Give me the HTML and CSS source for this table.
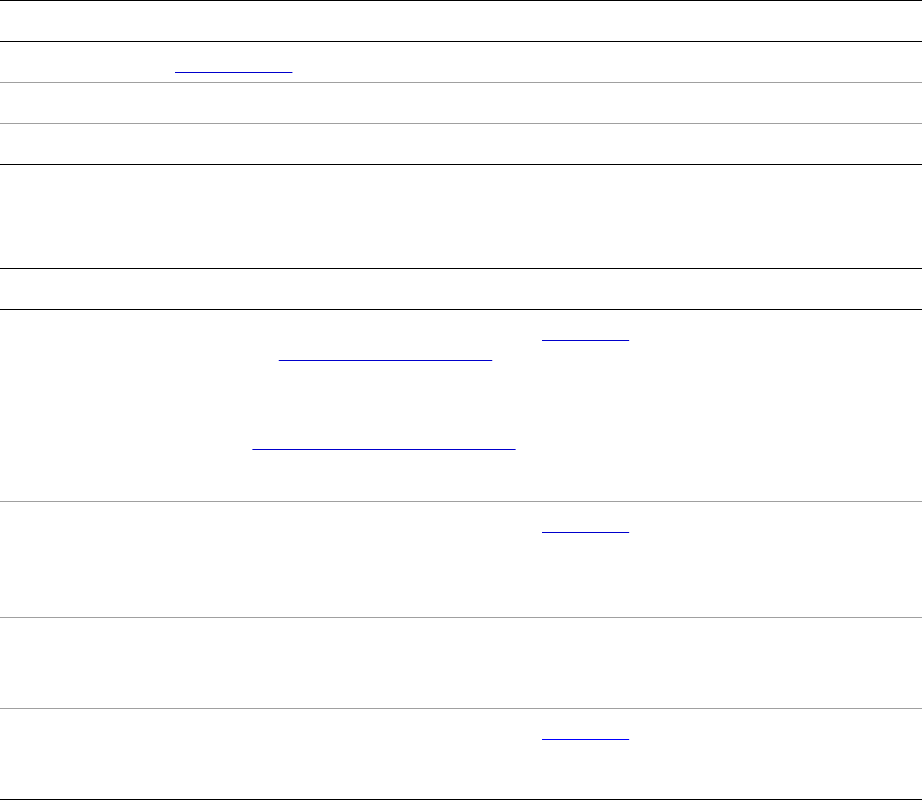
FILE: index.html
```html
<!DOCTYPE html>
<html lang="en">
<head>
<meta charset="utf-8">
<title>Release overview</title>
<link rel="stylesheet" href="styles.css">
</head>
<body>
<main class="page">
  <section class="tbl tbl-top">
    <div class="row row-head">
      <div class="cell c-key">Project</div>
      <div class="cell c-val">Details</div>
    </div>
    <div class="row">
      <div class="cell c-key">Guide</div>
      <div class="cell c-val"><a class="lnk" href="#docs">Reference guide</a></div>
    </div>
    <div class="row">
      <div class="cell c-key">License</div>
      <div class="cell c-val">MIT</div>
    </div>
    <div class="row row-end">
      <div class="cell c-key">Maintainer</div>
      <div class="cell c-val">Core team</div>
    </div>
  </section>

  <section class="tbl tbl-main">
    <div class="row row-intro">
      <div class="cell c-full">
        <p>Release history</p>
        <p>All published versions are listed below, newest first.</p>
        <p>Each entry links to its notes.</p>
        <p>Older releases are archived.</p>
      </div>
    </div>
    <div class="row row-head row-cols">
      <div class="cell">Version</div>
      <div class="cell c-mid">Requirements</div>
      <div class="cell">Notes</div>
    </div>
    <div class="row row-cols row-c">
      <div class="cell">2.4.0</div>
      <div class="cell c-mid">
        <p>Requires Node 18</p>
        <p class="shift"><a class="lnk" href="#install">Read the full installation guide</a></p>
        <p class="gap">Supports Linux, macOS</p>
        <p>and Windows on x64</p>
        <p>and arm64 builds.</p>
        <p><a class="lnk" href="#platforms">See the list of all supported platforms</a></p>
      </div>
      <div class="cell"><a class="lnk" href="#v240">More details</a></div>
    </div>
    <div class="row row-cols row-d">
      <div class="cell">2.3.1</div>
      <div class="cell c-mid">Requires Node 16</div>
      <div class="cell"><a class="lnk" href="#v231">More details</a></div>
    </div>
    <div class="row row-cols row-e">
      <div class="cell">2.3.0</div>
      <div class="cell c-mid">Requires Node 16</div>
      <div class="cell">No notes</div>
    </div>
    <div class="row row-cols row-f row-end">
      <div class="cell">2.2.0</div>
      <div class="cell c-mid">Requires Node 14</div>
      <div class="cell"><a class="lnk lnk-new" href="#v220">More details</a></div>
    </div>
  </section>
</main>
</body>
</html>
```

FILE: styles.css
```css
html, body {
  margin: 0;
  padding: 0;
  background: #ffffff;
}

body {
  font-family: "Liberation Sans", Arial, sans-serif;
  font-size: 16px;
  line-height: 20px;
  color: #ffffff;
}

p {
  margin: 0;
}

.page {
  width: 922px;
}

.tbl {
  display: flex;
  flex-direction: column;
}

.tbl-top {
  border-top: 1px solid #000000;
}

.row {
  display: grid;
  grid-template-columns: 167px 1fr;
  box-sizing: border-box;
  min-height: 41px;
  border-bottom: 1px solid #a0a0a0;
}

.row-head,
.row-end,
.row-intro {
  border-bottom-color: #000000;
}

.row-cols {
  grid-template-columns: 234px 300px 1fr;
}

.row-intro {
  grid-template-columns: 1fr;
  min-height: 104px;
}

.row-c { min-height: 192px; }
.row-d { min-height: 116px; }
.row-e { min-height: 91px; }
.row-f { min-height: 91px; }

.cell {
  padding: 14px 8px 6px;
}

.c-mid {
  text-align: center;
}

.shift {
  padding-left: 3px;
}

.gap {
  margin-top: 9px;
}

.lnk {
  color: transparent;
  text-decoration: underline;
  text-decoration-color: #0000cc;
  text-decoration-skip-ink: none;
}

.lnk-new {
  text-decoration-color: #0000ff;
}
```
